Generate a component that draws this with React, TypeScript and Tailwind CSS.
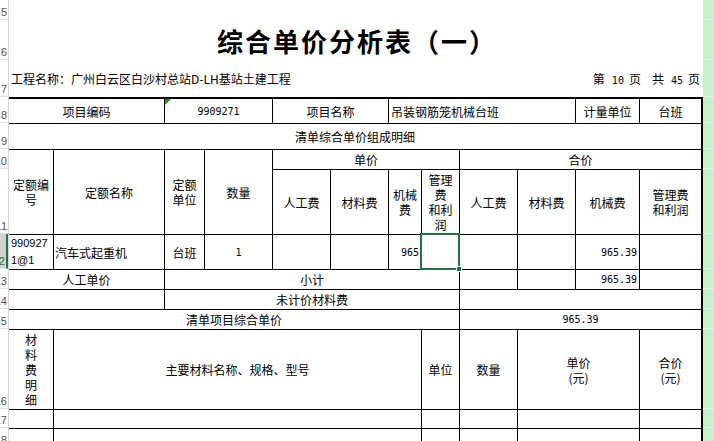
import React from "react";

const rowHeads: { n: string; h: string; active?: boolean }[] = [
  { n: "5", h: "h-[20px]" },
  { n: "6", h: "h-[40px]" },
  { n: "7", h: "h-[37px]" },
  { n: "8", h: "h-[26px]" },
  { n: "9", h: "h-[26px]" },
  { n: "10", h: "h-[20px]" },
  { n: "11", h: "h-[65px]" },
  { n: "12", h: "h-[35px]", active: true },
  { n: "13", h: "h-[20px]" },
  { n: "14", h: "h-[20px]" },
  { n: "15", h: "h-[20px]" },
  { n: "16", h: "h-[80px]" },
  { n: "17", h: "h-[19px]" },
  { n: "18", h: "h-[20px]" },
];

function RowHeader() {
  return (
    <div className="w-[9px] shrink-0 border-r border-[#d4d4d4] bg-white">
      {rowHeads.map((r) => (
        <div
          key={r.n}
          className={`${r.h} flex items-end justify-end overflow-hidden whitespace-nowrap border-b border-[#e1e1e1] pr-px text-[11px] leading-[13px] font-['Liberation_Sans',sans-serif] ${
            r.active ? "border-r-2 border-r-[#217346] bg-[#d2d2d2] text-[#217346]" : "text-[#555]"
          }`}
        >
          {r.n}
        </div>
      ))}
    </div>
  );
}

function GreenStrip() {
  return (
    <div className="w-[11px] shrink-0 bg-[#c6efce]">
      {rowHeads.map((r) => (
        <div key={r.n} className={`${r.h} border-b border-[#e2f4e6]`} />
      ))}
    </div>
  );
}

function Cell({ className = "", children }: { className?: string; children?: React.ReactNode }) {
  return (
    <div className={`flex items-center justify-center bg-white text-center leading-[15px] ${className}`}>
      {children}
    </div>
  );
}

const num = "font-['DejaVu_Sans_Mono',monospace] text-[10px]";

export default function App() {
  return (
    <div className="flex h-[441px] w-[714px] overflow-hidden bg-white text-[12px] text-black font-['Noto_Sans_CJK_SC',sans-serif]">
      <RowHeader />
      <div className="w-[694px] shrink-0">
        <div className="flex h-[60px] items-end justify-center pb-[6px] pl-[2px]">
          <h1 className="text-[26px] leading-[26px] font-bold tracking-[2px]">综合单价分析表（一）</h1>
        </div>
        <div className="flex h-[37px] items-end justify-between pb-[9px] pl-[2px] pr-[3px]">
          <span>工程名称：广州白云区白沙村总站D-LH基站土建工程</span>
          <span className="flex items-baseline">
            <span>第</span>
            <span className={`ml-[7px] ${num}`}>10</span>
            <span className="ml-[5px]">页</span>
            <span className="ml-[11px]">共</span>
            <span className={`ml-[7px] ${num}`}>45</span>
            <span className="ml-[5px]">页</span>
          </span>
        </div>
        <div className="grid grid-cols-[44px_110px_39px_67px_57px_57px_32px_37px_57px_57px_63px_61px] grid-rows-[24px_25px_19px_64px_34px_19px_19px_19px_79px_18px_20px] gap-px border-t-2 border-r-2 border-black bg-black">
          {/* row 8 */}
          <Cell className="col-span-2">项目编码</Cell>
          <Cell className={`relative col-span-2 ${num}`}>
            <span className="absolute left-0 top-0 h-0 w-0 border-t-[6px] border-r-[6px] border-t-[#228b22] border-r-transparent" />
            9909271
          </Cell>
          <Cell className="col-span-2">项目名称</Cell>
          <Cell className="col-span-4 justify-start pl-[2px]">吊装钢筋笼机械台班</Cell>
          <Cell>计量单位</Cell>
          <Cell>台班</Cell>

          {/* row 9 */}
          <Cell className="col-span-12">清单综合单价组成明细</Cell>

          {/* row 10-11 */}
          <Cell className="row-span-2">
            定额编
            <br />号
          </Cell>
          <Cell className="row-span-2">定额名称</Cell>
          <Cell className="row-span-2">
            定额
            <br />
            单位
          </Cell>
          <Cell className="row-span-2">数量</Cell>
          <Cell className="col-span-4">单价</Cell>
          <Cell className="col-span-4">合价</Cell>
          <Cell>人工费</Cell>
          <Cell>材料费</Cell>
          <Cell>
            机械
            <br />费
          </Cell>
          <Cell>
            管理
            <br />费<br />
            和利
            <br />润
          </Cell>
          <Cell>人工费</Cell>
          <Cell>材料费</Cell>
          <Cell>机械费</Cell>
          <Cell>
            管理费
            <br />
            和利润
          </Cell>

          {/* row 12 */}
          <Cell className="justify-start pl-[2px] text-left text-[11px] leading-[17px] font-['Liberation_Sans',sans-serif]">
            990927
            <br />
            1@1
          </Cell>
          <Cell className="justify-start pl-px">汽车式起重机</Cell>
          <Cell>台班</Cell>
          <Cell className={num}>1</Cell>
          <Cell />
          <Cell />
          <Cell className={`justify-end pr-[2px] ${num}`}>965</Cell>
          <Cell className="relative">
            <span className="absolute -top-[2px] -left-[2px] -right-px -bottom-px border-2 border-[#217346]" />
            <span className="absolute -right-[3px] -bottom-[3px] h-[6px] w-[6px] border border-white bg-[#217346]" />
          </Cell>
          <Cell />
          <Cell />
          <Cell className={`justify-end pr-[2px] ${num}`}>965.39</Cell>
          <Cell />

          {/* row 13 */}
          <Cell className="col-span-2">人工单价</Cell>
          <Cell className="col-span-6">小计</Cell>
          <Cell />
          <Cell />
          <Cell className={`justify-end pr-[2px] ${num}`}>965.39</Cell>
          <Cell />

          {/* row 14 */}
          <Cell className="col-span-2" />
          <Cell className="col-span-6">未计价材料费</Cell>
          <Cell className="col-span-4" />

          {/* row 15 */}
          <Cell className="col-span-8">清单项目综合单价</Cell>
          <Cell className={`col-span-4 ${num}`}>965.39</Cell>

          {/* row 16 */}
          <Cell>
            材<br />料<br />费<br />明<br />细
          </Cell>
          <Cell className="col-span-6">主要材料名称、规格、型号</Cell>
          <Cell>单位</Cell>
          <Cell>数量</Cell>
          <Cell className="col-span-2">
            单价
            <br />
            (元)
          </Cell>
          <Cell>
            合价
            <br />
            (元)
          </Cell>

          {/* row 17 */}
          <Cell />
          <Cell className="col-span-6" />
          <Cell />
          <Cell />
          <Cell className="col-span-2" />
          <Cell />

          {/* row 18 */}
          <Cell />
          <Cell className="col-span-6" />
          <Cell />
          <Cell />
          <Cell className="col-span-2" />
          <Cell />
        </div>
      </div>
      <GreenStrip />
    </div>
  );
}
